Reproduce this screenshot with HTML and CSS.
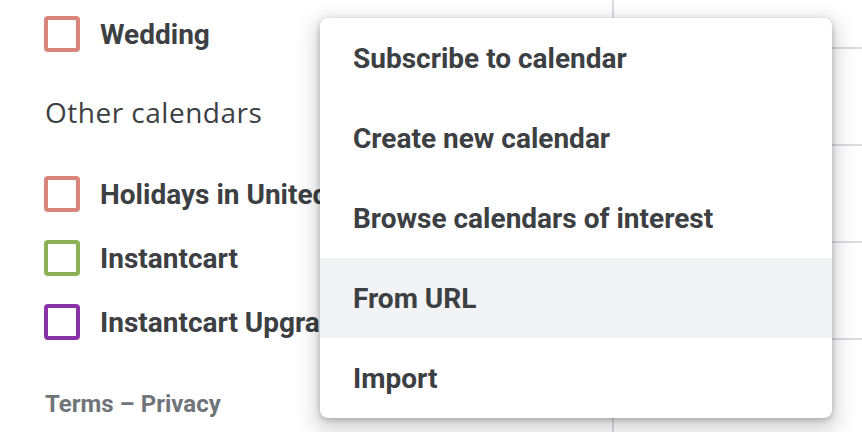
FILE: index.html
```html
<!DOCTYPE html>
<html>
<head>
<meta charset="utf-8">
<link rel="stylesheet" href="styles.css">
</head>
<body>
<div class="page">
  <aside class="sidebar">
    <div class="cal-item first"><span class="box salmon"></span><span class="label">Wedding</span></div>
    <div class="section-title">Other calendars</div>
    <div class="cal-item"><span class="box salmon"></span><span class="label">Holidays in United States</span></div>
    <div class="cal-item"><span class="box green"></span><span class="label">Instantcart</span></div>
    <div class="cal-item"><span class="box purple"></span><span class="label">Instantcart Upgrades</span></div>
    <div class="footer">Terms – Privacy</div>
  </aside>
  <main class="grid">
    <div class="row top"></div>
    <div class="row"></div>
    <div class="row"></div>
    <div class="row"></div>
    <div class="row"></div>
  </main>
  <div class="menu">
    <div class="menu-item">Subscribe to calendar</div>
    <div class="menu-item">Create new calendar</div>
    <div class="menu-item">Browse calendars of interest</div>
    <div class="menu-item active">From URL</div>
    <div class="menu-item">Import</div>
  </div>
</div>
</body>
</html>
```
FILE: styles.css
```css
html, body {
  margin: 0;
  padding: 0;
  background: #fff;
}
.page {
  position: relative;
  width: 862px;
  height: 432px;
  overflow: hidden;
  display: flex;
}
.sidebar {
  width: 612px;
  flex: none;
  padding-left: 44px;
  box-sizing: border-box;
  display: flex;
  flex-direction: column;
  white-space: nowrap;
}
.cal-item {
  display: flex;
  align-items: center;
  height: 64px;
  gap: 20px;
  font-family: Roboto, "Liberation Sans", sans-serif;
  font-weight: 700;
  font-size: 28px;
  color: #3c4043;
}
.cal-item.first {
  margin-top: 2px;
}
.box {
  width: 36px;
  height: 36px;
  box-sizing: border-box;
  border: 4px solid;
  border-radius: 4px;
  flex: none;
}
.salmon { border-color: #d9867a; }
.green { border-color: #8cb054; }
.purple { border-color: #8a32a8; }
.section-title {
  font-family: "Open Sans", sans-serif;
  font-size: 28px;
  letter-spacing: 0.5px;
  color: #3c4043;
  height: 96px;
  display: flex;
  align-items: center;
  padding-left: 1px;
  padding-bottom: 4px;
  box-sizing: border-box;
}
.footer {
  margin-top: 36px;
  font-family: Roboto, "Liberation Sans", sans-serif;
  font-weight: 700;
  font-size: 24px;
  color: #70757a;
  padding-left: 1px;
}
.grid {
  flex: 1;
  border-left: 2px solid #dadce0;
  display: flex;
  flex-direction: column;
}
.row {
  height: 95px;
  flex: none;
  border-bottom: 2px solid #dadce0;
}
.row.top {
  height: 47px;
}
.menu {
  position: absolute;
  left: 320px;
  top: 18px;
  width: 512px;
  background: #fff;
  border-radius: 8px;
  box-shadow: 0 8px 20px 6px rgba(0,0,0,0.15), 0 2px 6px rgba(0,0,0,0.25);
  overflow: hidden;
}
.menu-item {
  height: 80px;
  display: flex;
  align-items: center;
  padding-left: 33px;
  font-family: Roboto, "Liberation Sans", sans-serif;
  font-weight: 700;
  font-size: 28px;
  color: #3c4043;
}
.menu-item.active {
  background: #f1f3f4;
}
```
